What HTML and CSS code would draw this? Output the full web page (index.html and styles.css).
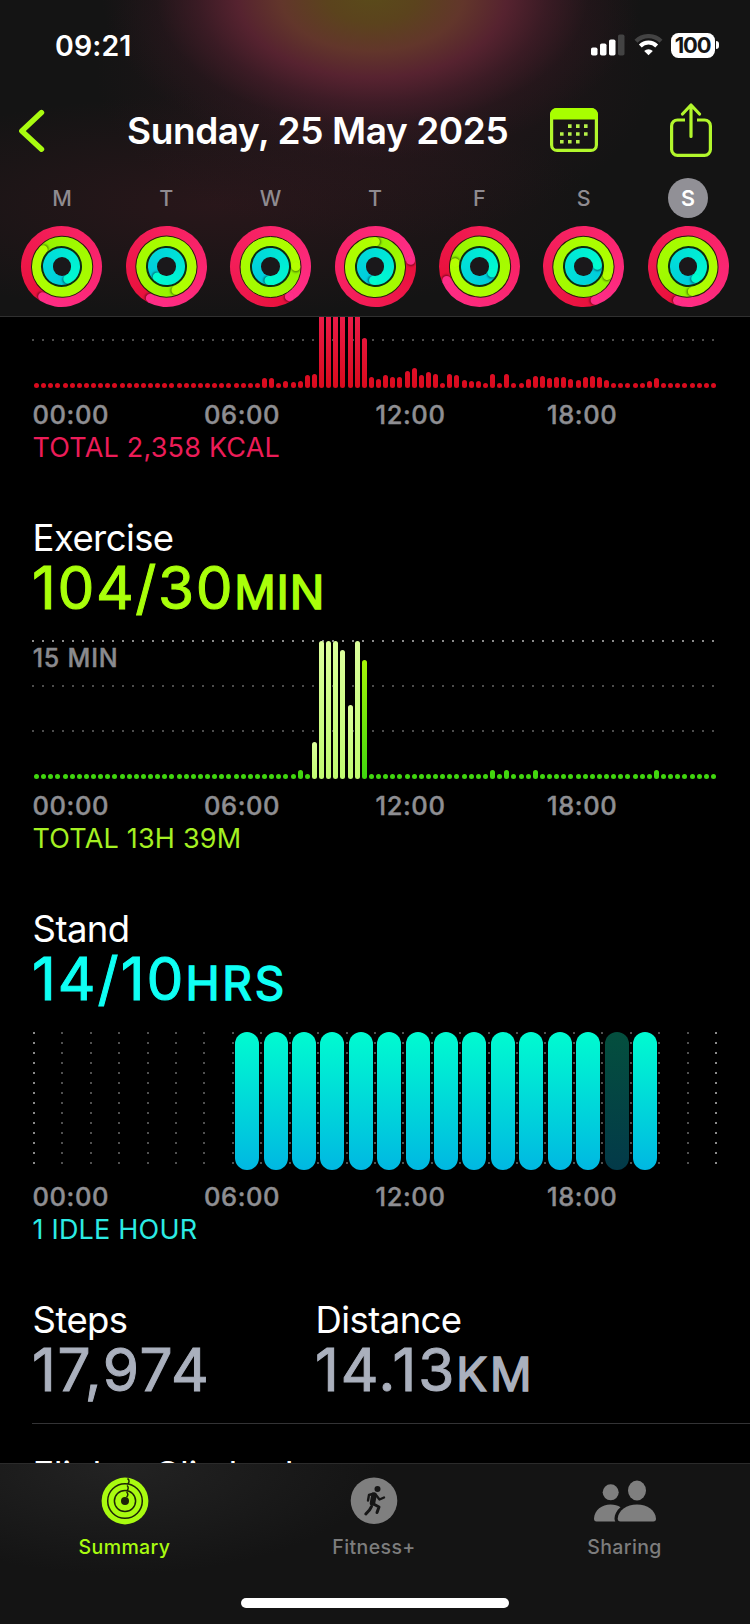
FILE: index.html
```html
<!DOCTYPE html>
<html lang="en">
<head>
    <meta charset="UTF-8">
    <meta name="viewport" content="width=device-width, initial-scale=1.0">
    <title>Summary</title>
    <link rel="stylesheet" href="styles.css">
    <script src="charts.js" defer></script>
</head>
<body>
    <header class="header">
        <!-- status bar -->
        <div class="status">
            <span class="clock">09:21</span>
            <div class="status-icons">
                <svg class="signal" width="34" height="22" viewBox="0 0 34 22">
                    <rect x="0" y="13.5" width="6.5" height="8" rx="1.8" fill="#fff"/>
                    <rect x="9" y="9.5" width="6.5" height="12" rx="1.8" fill="#fff"/>
                    <rect x="18" y="5.5" width="6.5" height="16" rx="1.8" fill="#fff"/>
                    <rect x="27" y="0.5" width="6.5" height="21" rx="1.8" fill="#434343"/>
                </svg>
                <svg class="wifi" width="29" height="22" viewBox="0 0 29 22">
                    <path d="M2 7.3A17.7 17.7 0 0 1 27 7.3" fill="none" stroke="#434343" stroke-width="4.3"/>
                    <path d="M6.3 12A11.6 11.6 0 0 1 22.7 12" fill="none" stroke="#fff" stroke-width="4"/>
                    <path d="M14.5 21.3l-4.3-4.4a6.1 6.1 0 0 1 8.6 0z" fill="#fff"/>
                </svg>
                <div class="battery"><span class="level">100</span></div>
            </div>
        </div>

        <!-- title bar -->
        <div class="nav">
            <svg class="back" width="28" height="46" viewBox="0 0 28 46">
                <path d="M23.5 4.5L3.8 23L23.5 41.2" fill="none" stroke="#a9fb10" stroke-width="5.4" stroke-linecap="round" stroke-linejoin="round"/>
            </svg>
            <h1 class="title">Sunday, 25 May 2025</h1>
            <svg class="calendar" width="48" height="44" viewBox="0 0 48 44">
                <rect x="1.6" y="1.6" width="44.8" height="40.8" rx="5.5" fill="none" stroke="#b2f72c" stroke-width="3.2"/>
                <path d="M0 11.5V6.5a6.5 6.5 0 0 1 6.5-6.5h35a6.5 6.5 0 0 1 6.5 6.5v5z" fill="#a8ff00"/>
                <g fill="#b6f048">
                    <path d="M18 16.3h3.6v3.6H18zM26 16.3h3.6v3.6H26zM34 16.3h3.6v3.6H34z"/>
                    <path d="M10 24.2h3.6v3.6H10zM18 24.2h3.6v3.6H18zM26 24.2h3.6v3.6H26zM34 24.2h3.6v3.6H34z"/>
                    <path d="M10 32h3.6v3.6H10zM18 32h3.6v3.6H18zM26 32h3.6v3.6H26z"/>
                </g>
            </svg>
            <svg class="share" width="42" height="54" viewBox="0 0 42 54" fill="none" stroke="#b2f72c" stroke-width="3.2">
                <path d="M15 17H7.5A5.9 5.9 0 0 0 1.6 22.9V46.4A5.9 5.9 0 0 0 7.5 52.3H34.5A5.9 5.9 0 0 0 40.4 46.4V22.9A5.9 5.9 0 0 0 34.5 17H27"/>
                <path d="M21 33.5V3M12.5 11L21 2L29.5 11" stroke-linecap="round" stroke-linejoin="round"/>
            </svg>
        </div>

        <div class="week" id="week"></div>
    </header>

    <main class="content">
        <section class="section">
            <div class="chart move" id="moveChart"></div>
            <div class="hours"><span>00:00</span><span>06:00</span><span>12:00</span><span>18:00</span></div>
            <p class="total red">TOTAL 2,358 KCAL</p>
        </section>

        <section class="section">
            <h2 class="name">Exercise</h2>
            <p class="value lime"><span class="num">104/30</span><span class="unit">MIN</span></p>
            <div class="chart exercise" id="exerciseChart"><span class="scale">15 MIN</span></div>
            <div class="hours"><span>00:00</span><span>06:00</span><span>12:00</span><span>18:00</span></div>
            <p class="total lime2">TOTAL 13H 39M</p>
        </section>

        <section class="section">
            <h2 class="name">Stand</h2>
            <p class="value wide cyan"><span class="num">14/10</span><span class="unit">HRS</span></p>
            <div class="stand" id="standChart"></div>
            <div class="hours"><span>00:00</span><span>06:00</span><span>12:00</span><span>18:00</span></div>
            <p class="total cyan2">1 IDLE HOUR</p>
        </section>

        <section class="stats">
            <div class="stat">
                <h2 class="name">Steps</h2>
                <p class="value grey"><span class="num">17,974</span></p>
            </div>
            <div class="stat">
                <h2 class="name">Distance</h2>
                <p class="value wide grey"><span class="num">14.13</span><span class="unit">KM</span></p>
            </div>
        </section>
        <h2 class="name flights">Flights Climbed</h2>
    </main>

    <footer class="tabbar">
        <nav class="tabs">
            <a class="tab active">
                <svg width="48" height="48" viewBox="0 0 48 48">
                    <circle cx="24" cy="24" r="23.4" fill="#a9fb10"/>
                    <g fill="none" stroke="#1c2408" stroke-width="1.5">
                        <circle cx="24" cy="24" r="17.3"/>
                        <circle cx="24" cy="24" r="10.6"/>
                        <path d="M26.5 1.5a3.2 3.2 0 0 1 0 5.5M26 8.5a3.2 3.2 0 0 1 0 5M25.5 15a3 3 0 0 1 0 5"/>
                    </g>
                    <circle cx="24" cy="24" r="4" fill="#1c2408"/>
                </svg>
                <span>Summary</span>
            </a>
            <a class="tab">
                <svg width="48" height="48" viewBox="0 0 48 48">
                    <circle cx="24" cy="23.7" r="23.3" fill="#7f7f7f"/>
                    <circle cx="27.5" cy="12" r="3" fill="#161616"/>
                    <g fill="none" stroke="#161616" stroke-linecap="round" stroke-linejoin="round">
                        <path d="M24 18L22.5 26" stroke-width="5.5"/>
                        <path d="M22.5 16.8L19 18L18 23.5M26 18L29.5 22.5L34 20.5" stroke-width="2.4"/>
                        <path d="M23.5 27L29 30L27 35.5M21.5 29.5L19.5 33L15.8 37" stroke-width="3"/>
                    </g>
                </svg>
                <span>Fitness+</span>
            </a>
            <a class="tab">
                <svg width="62" height="48" viewBox="0 0 62 48" fill="#7f7f7f">
                    <circle cx="16.7" cy="15.3" r="8"/>
                    <ellipse cx="43" cy="13.5" rx="9" ry="10"/>
                    <path d="M2.5 44.5C0.8 44.5 0 43.5 0 41.5C0.5 33 8 27.5 16.5 27.5C20.5 27.5 24 28.5 26.5 30.2C22.5 33.5 20.6 37.5 20.5 41.5C20.5 42.8 20.8 43.7 21.3 44.5Z"/>
                    <path d="M26.5 44.5C24.6 44.5 23.7 43.5 23.7 41.5C24.3 33.5 32.5 27.5 43 27.5C53.5 27.5 61.4 33.5 62 41.5C62 43.5 61.2 44.5 59.3 44.5Z"/>
                </svg>
                <span>Sharing</span>
            </a>
        </nav>
        <div class="home"></div>
    </footer>
</body>
</html>
```
FILE: styles.css
```css
*{
    margin: 0;
    padding: 0;
    box-sizing: border-box;
}

body{
    width: 750px;
    height: 1624px;
    display: flex;
    flex-direction: column;
    overflow: hidden;
    background-color: #000;
    color: #fff;
    font-family: Inter, "Liberation Sans", sans-serif;
    font-weight: 400;
}

/* header */
.header{
    height: 317px;
    flex: none;
    border-bottom: 1px solid #303030;
    background:
        radial-gradient(ellipse 270px 165px at 372px -5px, #5a4b1a 0%, #5b431d 17%, #62362b 34%, rgba(92,36,50,.9) 50%, rgba(74,30,43,.65) 65%, rgba(56,25,35,.3) 80%, rgba(40,20,27,0) 100%),
        radial-gradient(ellipse 280px 170px at 375px 70px, rgba(66,28,43,.6), rgba(50,24,32,.35) 50%, transparent),
        radial-gradient(ellipse 380px 110px at 215px 205px, rgba(54,24,30,.6), transparent),
        #141414;
}

.status{
    display: flex;
    justify-content: space-between;
    align-items: center;
    height: 90px;
    padding: 0 31px 0 55px;
}

.clock{
    font-size: 28.5px;
    font-weight: 600;
    letter-spacing: .1px;
}

.status-icons{
    display: flex;
    align-items: center;
}

.wifi{
    margin: 0 8px 0 9px;
}

.battery{
    display: flex;
    align-items: center;
    gap: 1px;
}

.battery::after{
    content: "";
    width: 3px;
    height: 8px;
    border-radius: 0 4px 4px 0;
    background-color: #fff;
}

.level{
    width: 44px;
    height: 25px;
    border-radius: 7.5px;
    background-color: #fff;
    color: #161616;
    font-size: 22px;
    font-weight: 700;
    line-height: 25px;
    letter-spacing: -1.2px;
    text-indent: -1px;
    text-align: center;
}

.nav{
    display: flex;
    align-items: center;
    height: 82px;
    padding: 0 38px 0 18px;
}

.title{
    width: 420px;
    margin-left: 81px;
    font-size: 37px;
    font-weight: 600;
    letter-spacing: -.4px;
    line-height: 46px;
    white-space: nowrap;
}

.calendar{
    margin: 0 0 2px 3px;
}

.share{
    margin: 0 0 2px 72px;
}

/* week rings */
.week{
    display: grid;
    grid-template-columns: repeat(7, 1fr);
    padding: 0 9.8px;
}

.day{
    display: flex;
    flex-direction: column;
    align-items: center;
    gap: 8px;
}

.letter{
    width: 40px;
    height: 40px;
    margin-top: 6px;
    border-radius: 50%;
    color: #8f8b90;
    font-size: 21.5px;
    font-weight: 500;
    line-height: 41px;
    text-align: center;
}

.selected .letter{
    background-color: #919096;
    color: #fff;
    font-weight: 600;
}

.rings{
    display: grid;
    place-items: center;
    width: 81px;
    height: 81px;
}

.ring, .hole{
    grid-area: 1 / 1;
    border-radius: 50%;
}

.ring{
    --r: 35.6px;
    width: 81px;
    height: 81px;
    display: grid;
    place-items: center;
    overflow: hidden;
    transform: rotate(var(--end));
    background: conic-gradient(#e8103a, #f51f5c 40%, #ff2d87);
}

.ring::after{
    content: "";
    width: 9.4px;
    height: 9.4px;
    border-radius: 50%;
    background-color: #ff2d87;
    box-shadow: 1.5px 0 2px rgba(0,0,0,.4);
    transform: translateY(calc(var(--r) * -1));
}

.ring.green{
    --r: 24.8px;
    width: 61.5px;
    height: 61.5px;
    border: 1.5px solid #26200c;
    background: conic-gradient(#93f300, #a2fa00 25%, #b0ff00) border-box;
}

.ring.green::after{
    background-color: #b4ff00;
}

.ring.blue{
    --r: 14px;
    width: 41px;
    height: 41px;
    border: 2px solid #0c2d12;
    background: conic-gradient(#00c9dc, #00dcda 40%, #00fbd0) border-box;
}

.ring.blue::after{
    background-color: #00fbd0;
}

.hole{
    z-index: 1;
    width: 18.5px;
    height: 18.5px;
    background-color: #1a181b;
}

/* content */
.content{
    flex: 1;
    overflow: hidden;
    padding-left: 32px;
}

.section{
    margin-bottom: 53px;
}

.name{
    padding-left: .6px;
    font-size: 36.5px;
    font-weight: 400;
    line-height: 42px;
    letter-spacing: -.6px;
}

.value{
    height: 56px;
    line-height: 57px;
    white-space: nowrap;
    stroke-linejoin: round;
}

.num{
    font-size: 58.5px;
    letter-spacing: 1.6px;
    -webkit-text-stroke: 1px currentColor;
}

.unit{
    font-size: 46px;
    line-height: 1;
    letter-spacing: .8px;
    -webkit-text-stroke: 1.5px currentColor;
}

.wide .num{
    letter-spacing: 2px;
}

.wide .unit{
    letter-spacing: 2.8px;
}

.lime{ color: #a9ff0a; }
.lime2{ color: #a5f022; }
.cyan{ color: #0ffff4; }
.cyan2{ color: #2cebe4; }
.grey{ color: #aab0bd; }
.red{ color: #ec1c58; }

.chart{
    display: grid;
    grid-template-columns: repeat(96, 1fr);
    align-items: end;
    justify-items: center;
    position: relative;
    width: 685px;
    height: 139px;
    margin-top: 25px;
    padding-left: 1px;
    background:
        linear-gradient(90deg, #8a8a8a 2px, transparent 2px) 0 0 / 10px 2px repeat-x,
        linear-gradient(90deg, #4c4c4c 2px, transparent 2px) 0 45px / 10px 2px repeat-x,
        linear-gradient(90deg, #4c4c4c 2px, transparent 2px) 0 90px / 10px 2px repeat-x;
}

/* scrolled under the header */
.chart.move{
    margin-top: -68px;
}

.bar{
    grid-row: 1;
    width: 5px;
    border-radius: 2.5px;
    background: linear-gradient(#fa2a70, #d90a1c) bottom / 100% 139px;
}

.exercise .bar{
    background: linear-gradient(#b8fa05, #3ed60e) bottom / 100% 139px;
}

.exercise .bar.workout{
    background: linear-gradient(#dcff9c, #c0fb70);
}

.scale{
    position: absolute;
    left: .7px;
    top: 3px;
    font-size: 25px;
    font-weight: 500;
    line-height: 30px;
    letter-spacing: .8px;
    color: #8a8a8e;
    -webkit-text-stroke: .4px currentColor;
}

.hours{
    display: grid;
    grid-template-columns: repeat(4, 171.5px);
    margin-top: 12px;
    padding-left: .5px;
    font-size: 25.5px;
    font-weight: 500;
    line-height: 30px;
    letter-spacing: .6px;
    color: #8e8e92;
    -webkit-text-stroke: .4px currentColor;
}

.total{
    margin-top: 2px;
    padding-left: .5px;
    font-size: 27px;
    line-height: 32px;
    letter-spacing: .2px;
}

.stand{
    display: grid;
    grid-template-columns: repeat(24, 1fr) 2px;
    width: 684px;
    height: 138px;
    margin: 26px 0 0 1px;
}

.hour{
    padding-left: 2px;
    background: linear-gradient(#505050 2px, transparent 2px) 0 0 / 2px 10px repeat-y;
}

.hour:first-child, .hour:last-child{
    background-image: linear-gradient(#8a8a8a 2px, transparent 2px);
}

.pill{
    width: 24px;
    height: 138px;
    margin: 0 auto;
    border-radius: 12px;
    background: linear-gradient(#00fbd0, #00b8e2);
}

.pill.idle{
    background: linear-gradient(#044f3e, #033a49);
}

.stats{
    display: grid;
    grid-template-columns: 283px 1fr;
    height: 125px;
    border-bottom: 1px solid #333335;
}

.flights{
    margin-top: 30px;
    letter-spacing: -.4px;
    white-space: nowrap;
}

/* tab bar */
.tabbar{
    flex: none;
    height: 161px;
    border-top: 1px solid #2b2b2b;
    background: radial-gradient(ellipse 260px 110px at 120px 0, #232323, #141414);
}

.tabs{
    display: grid;
    grid-template-columns: 249px 250px 251px;
    height: 134px;
    padding-top: 13px;
}

.tab{
    display: flex;
    flex-direction: column;
    align-items: center;
    gap: 9px;
    font-size: 19.5px;
    font-weight: 500;
    line-height: 26px;
    letter-spacing: .4px;
    color: #7d7d7d;
}

.tab.active{
    color: #a9fb10;
}

.home{
    width: 268px;
    height: 10px;
    margin: 0 auto;
    border-radius: 5px;
    background-color: #fff;
}
```
FILE: charts.js
```js
// angle where each ring ends: move, exercise, stand
var week = [
    ['M', 212, 313, 153],
    ['T', 207, 159, 221],
    ['W', 148, 90, 186],
    ['T', 80, 2, 188],
    ['F', 247, 280, 117],
    ['S', 161, 111, 85],
    ['S', 198, 170, 149]
];

// bar heights for each 15 minutes, 5 = nothing recorded
var move = fill(96);
set(move, 32, [10, 10, 5, 7, 6, 7, 13, 14, 139, 139, 139, 139, 139, 139, 50, 11,
    9, 13, 11, 11, 17, 20, 13, 16, 14, 5, 14, 13, 8, 7, 7, 5, 14, 5, 14, 5, 5,
    9, 12, 12, 10, 11, 11, 9, 8, 11, 12, 11, 8]);
set(move, 86, [7, 10]);

var exercise = fill(96);
set(exercise, 37, [9, 5, 37, 138, 138, 138, 129, 74, 138, 119]);
[64, 66, 70, 87].forEach(function(i){ exercise[i] = 9; });

function fill(n){
    var arr = [];
    for(var i = 0; i < n; i++) arr.push(5);
    return arr;
}

function set(arr, from, values){
    for(var i = 0; i < values.length; i++) arr[from + i] = values[i];
}

function add(parent, className){
    var el = document.createElement('div');
    el.className = className;
    parent.appendChild(el);
    return el;
}

function drawBars(id, arr, first, last){
    var chart = document.getElementById(id);
    for(var i = 0; i < arr.length; i++){
        var bar = add(chart, i >= first && i <= last ? 'bar workout' : 'bar');
        bar.style.height = arr[i] + 'px';
    }
}

drawBars('moveChart', move);
drawBars('exerciseChart', exercise, 39, 45);

// stand hours
var stand = document.getElementById('standChart');
for(var i = 0; i <= 24; i++){
    var hour = add(stand, 'hour');
    if(i >= 7 && i <= 21) add(hour, i == 20 ? 'pill idle' : 'pill');
}

// week
week.forEach(function(d, i){
    var day = add(document.getElementById('week'), i == 6 ? 'day selected' : 'day');
    add(day, 'letter').textContent = d[0];
    var rings = add(day, 'rings');
    ['red-ring', 'green', 'blue'].forEach(function(color, n){
        add(rings, 'ring ' + color).style.setProperty('--end', d[n + 1] + 'deg');
    });
    add(rings, 'hole');
});
```
